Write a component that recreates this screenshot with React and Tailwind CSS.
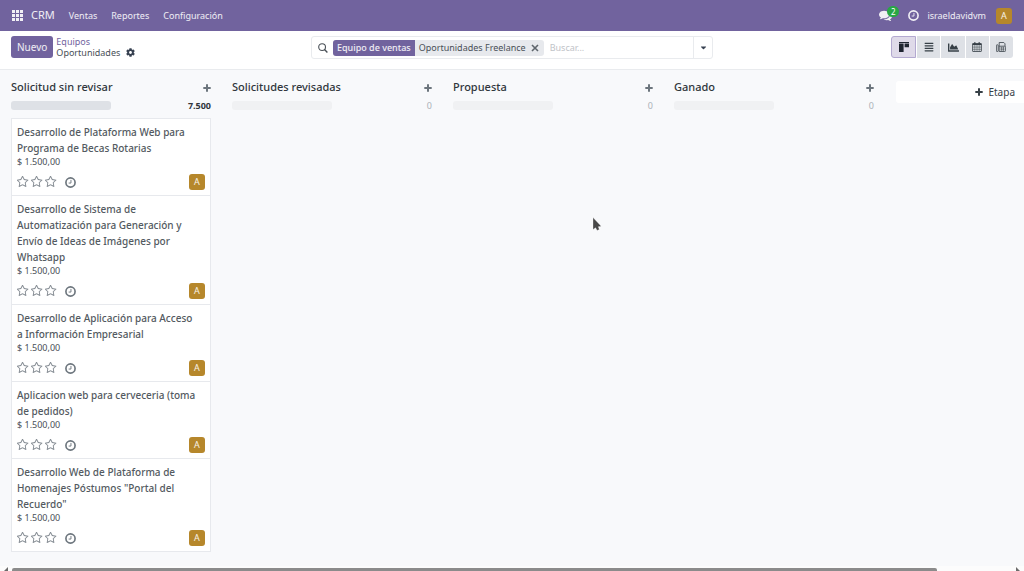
import React, { useState } from "react";
import { FaAlignJustify, FaCaretDown, FaChartArea, FaCog } from "react-icons/fa";

const STAGES = [
  {
    name: "Solicitud sin revisar",
    total: "7.500",
    cards: [
      { title: "Desarrollo de Plataforma Web para Programa de Becas Rotarias", amount: "$ 1.500,00" },
      {
        title: "Desarrollo de Sistema de Automatización para Generación y Envío de Ideas de Imágenes por Whatsapp",
        amount: "$ 1.500,00",
      },
      { title: "Desarrollo de Aplicación para Acceso a Información Empresarial", amount: "$ 1.500,00" },
      { title: "Aplicacion web para cerveceria (toma de pedidos)", amount: "$ 1.500,00" },
      { title: 'Desarrollo Web de Plataforma de Homenajes Póstumos "Portal del Recuerdo"', amount: "$ 1.500,00" },
    ],
  },
  { name: "Solicitudes revisadas", total: "0", cards: [] },
  { name: "Propuesta", total: "0", cards: [] },
  { name: "Ganado", total: "0", cards: [] },
];

const VIEWS = [
  { id: "kanban", label: "Kanban", icon: <KanbanIcon /> },
  { id: "list", label: "Lista", icon: <FaAlignJustify size={10} /> },
  { id: "graph", label: "Gráfico", icon: <FaChartArea size={11} /> },
  { id: "calendar", label: "Calendario", icon: <CalendarIcon /> },
  { id: "report", label: "Informe", icon: <FaxIcon /> },
];

function AppsIcon() {
  return (
    <svg viewBox="0 0 11 11" className="size-[11px]" fill="currentColor" aria-hidden="true">
      {[0, 4, 8].map((y) => [0, 4, 8].map((x) => <rect key={`${x}-${y}`} x={x} y={y} width="3" height="3" />))}
    </svg>
  );
}

function ChatIcon() {
  return (
    <svg viewBox="0 0 1792 1792" className="size-[13px]" fill="currentColor" aria-hidden="true">
      <path d="M1408 768q0 139-94 257t-256.5 186.5-353.5 68.5q-86 0-176-16-124 88-278 128-36 9-86 16h-3q-11 0-20.5-8t-11.5-21q-1-3-1-6.5t.5-6.5 2-6l2.5-5 3.5-5.5 4-5 4.5-5 4-4.5q5-6 23-25t26-29.5 22.5-29 25-38.5 20.5-44q-124-72-195-177t-71-224q0-139 94-257t256.5-186.5 353.5-68.5 353.5 68.5 256.5 186.5 94 257zm384 256q0 120-71 224.5t-195 176.5q10 24 20.5 44t25 38.5 22.5 29 26 29.5 23 25q1 1 4 4.5t4.5 5 4 5 3.5 5.5l2.5 5 2 6 .5 6.5-1 6.5q-3 14-13 22t-22 7q-50-7-86-16-154-40-278-128-90 16-176 16-271 0-472-132 58 4 88 4 161 0 309-45t264-129q125-92 192-212t67-254q0-77-23-152 129 71 204 178t75 230z" />
    </svg>
  );
}

function ClockIcon() {
  return (
    <svg viewBox="0 0 12 12" className="size-[11px]" fill="none" stroke="currentColor" aria-hidden="true">
      <circle cx="6" cy="6" r="5" strokeWidth="1.8" />
      <path d="M6.5 3.2v3.4H4" strokeWidth="1" />
    </svg>
  );
}

function StarIcon() {
  return (
    <svg viewBox="64 128 1664 1600" className="size-3" fill="currentColor" aria-hidden="true">
      <path d="M1137 1004l306-297-422-62-189-382-189 382-422 62 306 297-73 421 378-199 377 199zm527-357q0 22-26 48l-363 354 86 500q1 7 1 20 0 50-41 50-19 0-40-12l-449-236-449 236q-22 12-40 12-21 0-31.5-14.5t-10.5-35.5q0-6 2-20l86-500-364-354q-25-27-25-48 0-37 56-46l502-73 225-455q19-41 49-41t49 41l225 455 502 73q56 9 56 46z" />
    </svg>
  );
}

function PlusIcon() {
  return (
    <svg viewBox="0 0 8 8" className="size-2" fill="currentColor" aria-hidden="true">
      <path d="M3 .3h2V3h2.7v2H5v2.7H3V5H.3V3H3z" />
    </svg>
  );
}

function KanbanIcon() {
  return (
    <svg viewBox="0 0 10 10" className="size-2.5" fill="currentColor" aria-hidden="true">
      <path d="M0 0h10v1H0zM0 1.4h4.6V10H0zM5.6 1.4H10v3.8H5.6z" />
    </svg>
  );
}

function CalendarIcon() {
  return (
    <svg viewBox="0 0 10 10" className="size-2.5" fill="none" stroke="currentColor" aria-hidden="true">
      <rect x=".6" y="1.5" width="8.8" height="8" rx=".4" strokeWidth=".8" />
      <path d="M.6 2.3h8.8" strokeWidth="1.5" />
      <path d="M2.8.2v2M7.2.2v2" strokeWidth="1.4" />
      <path d="M.6 5.1h8.8M.6 7.3h8.8M2.8 3v6.5M5 3v6.5M7.2 3v6.5" strokeWidth=".5" />
    </svg>
  );
}

function FaxIcon() {
  return (
    <svg viewBox="0 0 10 10" className="size-2.5" fill="none" stroke="currentColor" aria-hidden="true">
      <rect x=".4" y="2.8" width="1.8" height="6.7" rx=".6" strokeWidth=".8" />
      <path d="M3.2 9.5V.5h4.6l1.2 1.3v2.4M3.2 4.2h5.4a1 1 0 0 1 1 1v3.3a1 1 0 0 1-1 1H3.2" strokeWidth=".8" />
      <path d="M4.5 6h4M4.5 7.8h4M5.3 4.8v4M7.4 4.8v4" strokeWidth=".6" />
    </svg>
  );
}

function SearchIcon() {
  return (
    <svg viewBox="0 0 10 10" className="size-2.5" fill="none" stroke="currentColor" aria-hidden="true">
      <circle cx="4.1" cy="4.1" r="3.4" strokeWidth="1.1" />
      <path d="M6.5 6.5l2.9 2.9" strokeWidth="1.4" />
    </svg>
  );
}

function CloseIcon() {
  return (
    <svg viewBox="0 0 8 8" className="size-2" fill="none" stroke="currentColor" aria-hidden="true">
      <path d="M1 1l6 6M7 1L1 7" strokeWidth="1.6" />
    </svg>
  );
}

function Avatar() {
  return (
    <span className="flex size-4 shrink-0 items-center justify-center rounded-[3px] bg-[#b6872b] text-[9px] text-white/90">
      A
    </span>
  );
}

function Navbar() {
  return (
    <header className="flex h-[31px] shrink-0 items-center justify-between bg-[#71639e] px-3 text-[9px] text-white/90">
      <nav className="flex items-center">
        <button type="button" aria-label="Aplicaciones">
          <AppsIcon />
        </button>
        <a href="#crm" className="ml-2 text-[11px]">CRM</a>
        <div className="ml-3.5 flex items-center gap-3.5">
          <a href="#ventas">Ventas</a>
          <a href="#reportes">Reportes</a>
          <a href="#configuracion">Configuración</a>
        </div>
      </nav>
      <div className="flex items-center">
        <button type="button" aria-label="Mensajes" className="relative mr-4">
          <ChatIcon />
          <span className="absolute -top-[3px] left-2 flex h-[11px] w-3 items-center justify-center rounded-full bg-[#28a745] text-[8px] text-white">
            2
          </span>
        </button>
        <button type="button" aria-label="Actividades" className="mr-2">
          <ClockIcon />
        </button>
        <button type="button" className="flex items-center gap-2.5">
          israeldavidvm
          <Avatar />
        </button>
      </div>
    </header>
  );
}

function ControlPanel() {
  const [view, setView] = useState("kanban");
  const [query, setQuery] = useState("");

  return (
    <div className="grid shrink-0 grid-cols-[1fr_402px_1fr] items-start border-b border-[#e9ebee] bg-white px-[11px] pt-[5px] pb-[10px]">
      <div className="flex items-center gap-[3px]">
        <button type="button" className="h-[22px] rounded-[3px] bg-[#71639e] px-1.5 text-[10px] text-white/90">
          Nuevo
        </button>
        <div className="text-[9px] leading-[11px]">
          <a href="#equipos" className="block text-[#71639e]">Equipos</a>
          <div className="flex items-center gap-1.5 text-[#495057]">
            <span>Oportunidades</span>
            <button type="button" aria-label="Acciones" className="text-[#374151]">
              <FaCog size={9} />
            </button>
          </div>
        </div>
      </div>

      <div className="flex h-[23px] items-stretch rounded-[3px] border border-[#e9ebee] text-[9px]">
        <div className="flex min-w-0 flex-1 items-center pl-1.5">
          <span className="mr-[5px] text-[#495057]">
            <SearchIcon />
          </span>
          <div className="flex h-4 shrink-0 items-center overflow-hidden rounded-[3px] bg-[#e7e9ed]">
            <span className="flex h-full items-center bg-[#71639e] px-1 font-medium text-white/90">
              Equipo de ventas
            </span>
            <span className="pl-1 text-[#495057]">Oportunidades Freelance</span>
            <button type="button" aria-label="Quitar filtro" className="px-[5px] text-[#5f666d]">
              <CloseIcon />
            </button>
          </div>
          <input
            type="text"
            aria-label="Buscar"
            placeholder="Buscar..."
            value={query}
            onChange={(e) => setQuery(e.target.value)}
            className="min-w-0 flex-1 bg-transparent px-1.5 outline-none placeholder:text-[#bfc3c8]"
          />
        </div>
        <button
          type="button"
          aria-label="Opciones de búsqueda"
          className="flex w-[19px] items-center justify-center border-l border-[#e9ebee] text-[#374151]"
        >
          <FaCaretDown size={9} />
        </button>
      </div>

      <div className="flex w-[122px] gap-px justify-self-end">
        {VIEWS.map((v) => (
          <button
            key={v.id}
            type="button"
            aria-label={v.label}
            aria-pressed={view === v.id}
            onClick={() => setView(v.id)}
            className={`flex h-[22px] flex-1 items-center justify-center first:rounded-l-[3px] last:rounded-r-[3px] ${
              view === v.id ? "border border-[#b3a9d0] bg-[#dfdae9] text-[#1f2430]" : "bg-[#dee1e6] text-[#374047]"
            }`}
          >
            {v.icon}
          </button>
        ))}
      </div>
    </div>
  );
}

function Card({ card }) {
  return (
    <article className="-mt-px border border-[#e7e9ed] bg-white px-[5px] py-[5px]">
      <h3 className="pr-1.5 text-[10px] leading-4 font-medium text-[#535a61]">{card.title}</h3>
      <p className="text-[9px] leading-3 text-[#495057]">{card.amount}</p>
      <div className="mt-1.5 flex items-center">
        <div className="flex gap-0.5 text-[#868d94]">
          {[1, 2, 3].map((n) => (
            <button key={n} type="button" aria-label={`Prioridad ${n}`}>
              <StarIcon />
            </button>
          ))}
        </div>
        <button type="button" aria-label="Actividades" className="ml-2 text-[#6c757d]">
          <ClockIcon />
        </button>
        <span className="ml-auto">
          <Avatar />
        </span>
      </div>
    </article>
  );
}

function Stage({ stage }) {
  const empty = stage.cards.length === 0;

  return (
    <section className="w-[221px] shrink-0 pr-[10px] pl-[11px]">
      <div className="flex h-[35px] items-center justify-between">
        <h2 className="text-[11px] font-medium text-[#30363c]">{stage.name}</h2>
        <button type="button" aria-label={`Añadir en ${stage.name}`} className="text-[#6c757d]">
          <PlusIcon />
        </button>
      </div>
      <div className="-mt-1 mb-[9px] flex h-[9px] items-center justify-between text-[9px]">
        <div className={`h-[9px] w-[100px] rounded-[3px] ${empty ? "bg-[#f0f1f3]" : "bg-[#dee1e6]"}`} />
        <span className={empty ? "text-[#adb2b8]" : "font-bold text-[#30363c]"}>{stage.total}</span>
      </div>
      {stage.cards.map((card) => (
        <Card key={card.title} card={card} />
      ))}
    </section>
  );
}

// Always visible horizontal scrollbar at the foot of the board
function ScrollTrack() {
  return (
    <div className="flex h-[5px] shrink-0 items-end justify-between bg-[#fcfcfc] px-1">
      <svg viewBox="0 0 4 4" className="size-1" fill="#6b6b6b" aria-hidden="true">
        <path d="M4 0v4H0z" />
      </svg>
      <div className="mr-auto ml-1 h-[3px] w-[91%] rounded-t-[2px] bg-[#8b8b8b]" />
      <svg viewBox="0 0 4 4" className="size-1" fill="#6b6b6b" aria-hidden="true">
        <path d="M0 0v4h4z" />
      </svg>
    </div>
  );
}

function Pointer() {
  return (
    <svg viewBox="0 0 10 15" className="pointer-events-none absolute top-[217px] left-[592px] h-[15px] w-2.5" aria-hidden="true">
      <path d="M1 .5v12l2.6-1.8 1.5 2.8 2.2-1-1-2.8 2.9-.5z" fill="#484848" stroke="#fff" strokeWidth=".3" />
    </svg>
  );
}

export default function App() {
  return (
    <div className="relative flex h-screen flex-col overflow-hidden bg-[#f8f9fb] font-['Noto_Sans',sans-serif]">
      <Navbar />
      <ControlPanel />
      <main className="flex min-h-0 flex-1 overflow-hidden">
        {STAGES.map((stage) => (
          <Stage key={stage.name} stage={stage} />
        ))}
        <div className="min-w-[128px] flex-1 pt-[11px] pl-3">
          <button
            type="button"
            className="flex h-[22px] w-full items-center justify-end gap-[5px] rounded-l-[3px] bg-white pr-[9px] text-[10px] text-[#374047]"
          >
            <PlusIcon />
            Etapa
          </button>
        </div>
      </main>
      <ScrollTrack />
      <Pointer />
    </div>
  );
}
